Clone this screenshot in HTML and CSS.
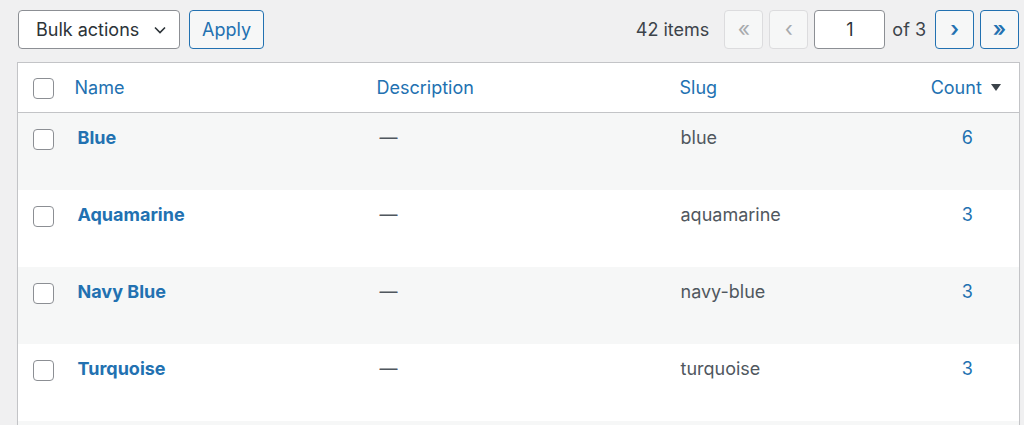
FILE: index.html
```html
<!DOCTYPE html>
<html>
<head>
  <link rel="stylesheet" href="styles.css">
</head>
<body>
  <div class="wrap">
    <div class="tablenav">
      <div class="bulk">
        <div class="select">
          <span>Bulk actions</span>
          <svg class="chevron" width="12" height="8" viewBox="0 0 12 8"><path d="M1 1.5l5 5 5-5" fill="none" stroke="#2c3338" stroke-width="1.6"/></svg>
        </div>
        <button class="button">Apply</button>
      </div>
      <div class="pages">
        <span class="count-items">42 items</span>
        <span class="page-btn disabled">«</span>
        <span class="page-btn disabled">‹</span>
        <div class="page-input">1</div>
        <span class="of">of 3</span>
        <span class="page-btn">›</span>
        <span class="page-btn">»</span>
      </div>
    </div>

    <table class="list">
      <colgroup>
        <col class="col-cb">
        <col class="col-name">
        <col class="col-desc">
        <col class="col-slug">
        <col class="col-count">
      </colgroup>
      <thead>
        <tr>
          <th class="cb"><span class="checkbox"></span></th>
          <th><a href="#">Name</a></th>
          <th><a href="#">Description</a></th>
          <th><a href="#">Slug</a></th>
          <th class="num"><a href="#">Count <span class="sort-arrow"></span></a></th>
        </tr>
      </thead>
      <tbody>
        <tr class="alt">
          <td class="cb"><span class="checkbox"></span></td>
          <td class="name"><a href="#">Blue</a></td>
          <td class="desc">—</td>
          <td class="slug">blue</td>
          <td class="num"><a href="#">6</a></td>
        </tr>
        <tr>
          <td class="cb"><span class="checkbox"></span></td>
          <td class="name"><a href="#">Aquamarine</a></td>
          <td class="desc">—</td>
          <td class="slug">aquamarine</td>
          <td class="num"><a href="#">3</a></td>
        </tr>
        <tr class="alt">
          <td class="cb"><span class="checkbox"></span></td>
          <td class="name"><a href="#">Navy Blue</a></td>
          <td class="desc">—</td>
          <td class="slug">navy-blue</td>
          <td class="num"><a href="#">3</a></td>
        </tr>
        <tr>
          <td class="cb"><span class="checkbox"></span></td>
          <td class="name"><a href="#">Turquoise</a></td>
          <td class="desc">—</td>
          <td class="slug">turquoise</td>
          <td class="num"><a href="#">3</a></td>
        </tr>
        <tr class="alt">
          <td class="cb"></td>
          <td></td>
          <td></td>
          <td></td>
          <td></td>
        </tr>
      </tbody>
    </table>
  </div>
</body>
</html>
```

FILE: styles.css
```css
body {
  margin: 0;
  background-color: #f0f0f1;
  font-family: Inter, "Liberation Sans", sans-serif;
  font-size: 18px;
  color: #3c434a;
}

a {
  color: #2271b1;
  text-decoration: none;
}

.wrap {
  padding: 10px 4px 0 17px;
}

.tablenav {
  display: flex;
  justify-content: space-between;
  align-items: center;
  height: 39px;
  margin-bottom: 13px;
  padding-right: 1px;
}

.bulk {
  display: flex;
  gap: 9px;
}

.select {
  box-sizing: border-box;
  width: 162px;
  height: 39px;
  margin-left: 1px;
  display: flex;
  align-items: center;
  justify-content: space-between;
  padding: 0 13px 0 17px;
  background-color: #fff;
  border: 1px solid #8c8f94;
  border-radius: 4px;
  color: #2c3338;
}

.button {
  box-sizing: border-box;
  width: 75px;
  height: 39px;
  font-family: inherit;
  font-size: 18px;
  color: #2271b1;
  background-color: #f6f7f7;
  border: 1px solid #2271b1;
  border-radius: 4px;
}

.pages {
  display: flex;
  align-items: center;
  gap: 6px;
}

.count-items {
  margin-right: 9px;
}

.page-btn {
  box-sizing: border-box;
  width: 39px;
  height: 39px;
  display: flex;
  align-items: center;
  justify-content: center;
  font-size: 21px;
  font-weight: 600;
  padding-bottom: 3px;
  color: #2271b1;
  background-color: #f6f7f7;
  border: 1px solid #2271b1;
  border-radius: 4px;
}

.page-btn.disabled {
  color: #a7aaad;
  border-color: #dcdcde;
  font-weight: 400;
}

.page-input {
  box-sizing: border-box;
  width: 71px;
  height: 39px;
  display: flex;
  align-items: center;
  justify-content: center;
  background-color: #fff;
  border: 1px solid #8c8f94;
  border-radius: 4px;
  color: #2c3338;
}

.of {
  margin: 0 3px 0 1px;
}

.list {
  width: 1003px;
  border-collapse: collapse;
  table-layout: fixed;
  background-color: #fff;
  border: 1px solid #c3c4c7;
  box-shadow: 0 1px 1px rgba(0, 0, 0, 0.04);
}

.col-cb { width: 47px; }
.col-name { width: 302px; }
.col-desc { width: 303px; }
.col-slug { width: 246px; }

th {
  height: 47px;
  padding: 0 0 0 10px;
  text-align: left;
  font-weight: 400;
  border-bottom: 1px solid #c3c4c7;
}

th.cb {
  padding: 2px 0 0 15px;
}

.checkbox {
  display: block;
  box-sizing: border-box;
  width: 21px;
  height: 21px;
  background-color: #fff;
  border: 1px solid #8c8f94;
  border-radius: 4px;
}

th.num {
  text-align: center;
  padding: 0 3px 0 0;
}

.sort-arrow {
  display: inline-block;
  width: 0;
  height: 0;
  margin-left: 4px;
  vertical-align: 3px;
  border-left: 5px solid transparent;
  border-right: 5px solid transparent;
  border-top: 7px solid #3c434a;
}

td {
  height: 77px;
  box-sizing: border-box;
  vertical-align: top;
  padding: 13px 0 0 13px;
  line-height: 24px;
  color: #50575e;
}

tr.alt td {
  background-color: #f6f7f7;
}

td.cb {
  padding: 16px 0 0 15px;
}

td.name a {
  font-weight: 700;
}

td.slug {
  padding-left: 11px;
}

td.num {
  text-align: center;
  padding-left: 0;
  padding-right: 0;
}
```
